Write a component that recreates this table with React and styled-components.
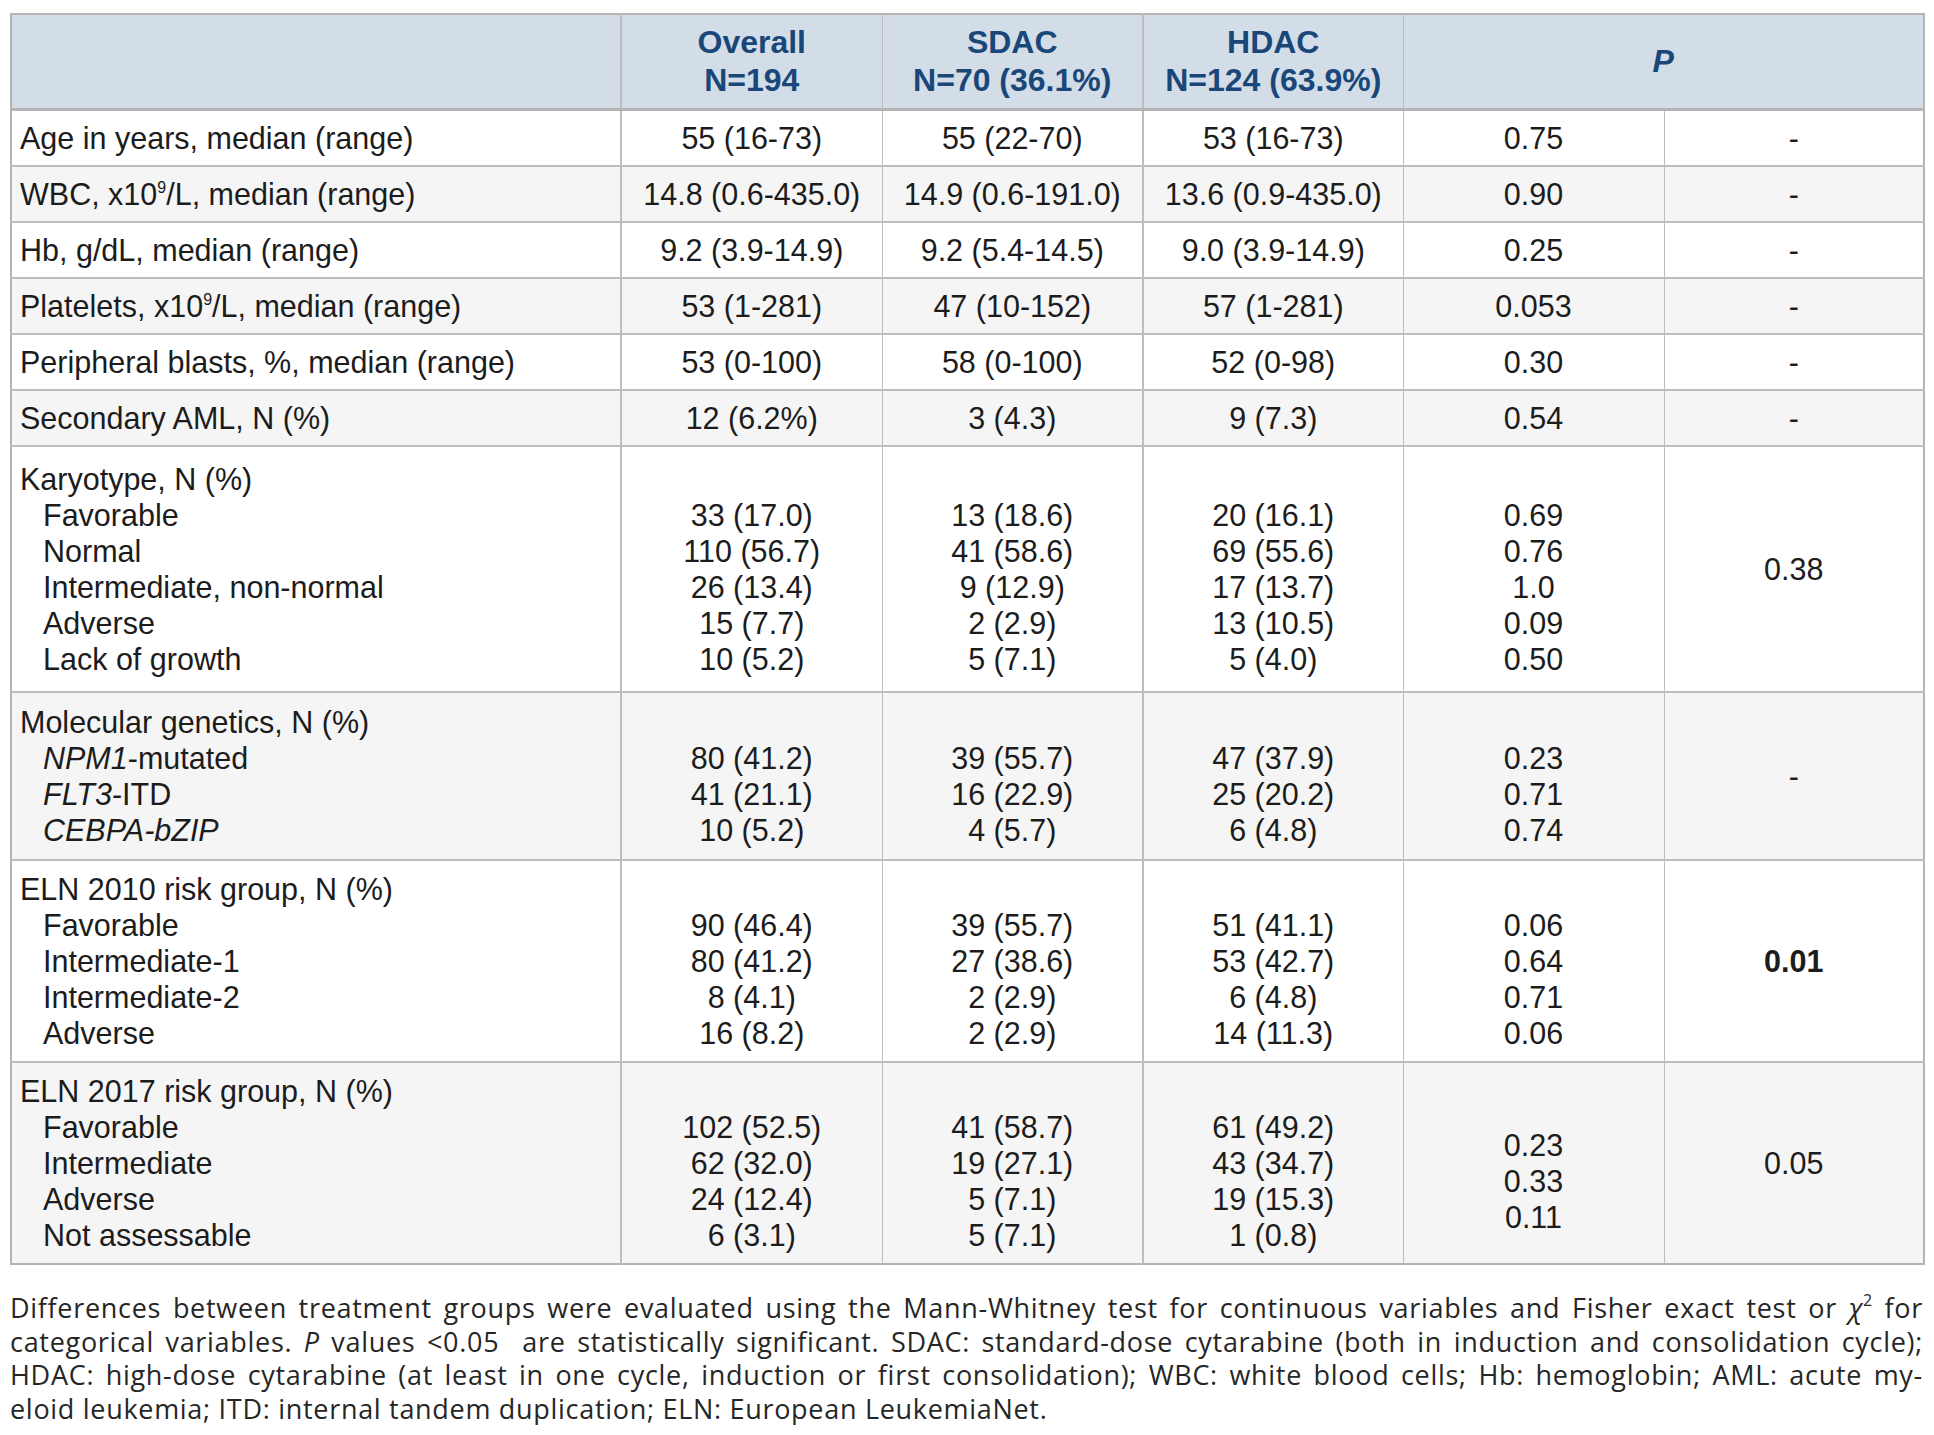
import React from "react";
import styled, { createGlobalStyle } from "styled-components";

const Global = createGlobalStyle`
  html, body { margin: 0; padding: 0; background: #ffffff; }
  body { font-family: "Liberation Sans", Arial, sans-serif; color: #1c1c1c; }
`;

const Page = styled.div`
  padding: 13px 11px 0 10px;
  width: 1913px;
`;

const Table = styled.table`
  width: 1913px;
  border-collapse: collapse;
  table-layout: fixed;
  border: 2px solid #b4b4b4;
  font-size: 30.5px;
  line-height: 36px;
`;

const HeadRow = styled.tr`
  background: #d3dde7;
  border-bottom: 3px solid #b4b4b4;
`;

const HeadCell = styled.th`
  padding: 8px 4px 9px;
  font-size: 32px;
  font-weight: 700;
  color: #1a4779;
  text-align: center;
  vertical-align: middle;
  line-height: 38px;
  white-space: nowrap;
  border-left: ${(p) => (p.$thick ? "2px" : "1px")} solid #bdbdbd;
  font-style: ${(p) => (p.$italic ? "italic" : "normal")};
  &:first-child { border-left: none; }
`;

const Row = styled.tr`
  background: ${(p) => (p.$alt ? "#f5f5f5" : "#ffffff")};
  border-top: 2px solid #bdbdbd;
`;

const Cell = styled.td`
  padding: ${(p) => p.$pad || 9}px 4px;
  text-align: center;
  vertical-align: middle;
  white-space: nowrap;
  border-left: ${(p) => (p.$thick ? "2px" : "1px")} solid #bdbdbd;
  font-weight: ${(p) => (p.$bold ? 700 : 400)};
`;

const LabelCell = styled(Cell)`
  text-align: left;
  padding-left: 8px;
  border-left: none;
`;

const Line = styled.div`
  height: 36px;
  padding-left: ${(p) => (p.$indent ? "23px" : "0")};
`;

const Sup = styled.sup`
  font-size: 16px;
  line-height: 0;
  vertical-align: 12px;
`;

const Note = styled.div`
  margin-top: 26px;
  font-family: "Open Sans", "Noto Sans", sans-serif;
  font-size: 27px;
  letter-spacing: 0.7px;
  line-height: 33.5px;
  color: #262626;
`;

const NoteLine = styled.div`
  white-space: nowrap;
  text-align: justify;
  text-align-last: ${(p) => (p.$last ? "left" : "justify")};
`;

const x109 = (
  <>
    x10<Sup>9</Sup>/L
  </>
);

const single = [
  { label: <>Age in years, median (range)</>, v: ["55 (16-73)", "55 (22-70)", "53 (16-73)"], p: "0.75" },
  { label: <>WBC, {x109}, median (range)</>, v: ["14.8 (0.6-435.0)", "14.9 (0.6-191.0)", "13.6 (0.9-435.0)"], p: "0.90" },
  { label: <>Hb, g/dL, median (range)</>, v: ["9.2 (3.9-14.9)", "9.2 (5.4-14.5)", "9.0 (3.9-14.9)"], p: "0.25" },
  { label: <>Platelets, {x109}, median (range)</>, v: ["53 (1-281)", "47 (10-152)", "57 (1-281)"], p: "0.053" },
  { label: <>Peripheral blasts, %, median (range)</>, v: ["53 (0-100)", "58 (0-100)", "52 (0-98)"], p: "0.30" },
  { label: <>Secondary AML, N (%)</>, v: ["12 (6.2%)", "3 (4.3)", "9 (7.3)"], p: "0.54" },
];

const multi = [
  {
    label: "Karyotype, N (%)",
    pad: 14,
    items: ["Favorable", "Normal", "Intermediate, non-normal", "Adverse", "Lack of growth"],
    v: [
      ["33 (17.0)", "110 (56.7)", "26 (13.4)", "15 (7.7)", "10 (5.2)"],
      ["13 (18.6)", "41 (58.6)", "9 (12.9)", "2 (2.9)", "5 (7.1)"],
      ["20 (16.1)", "69 (55.6)", "17 (13.7)", "13 (10.5)", "5 (4.0)"],
    ],
    p: ["0.69", "0.76", "1.0", "0.09", "0.50"],
    p2: "0.38",
  },
  {
    label: "Molecular genetics, N (%)",
    pad: 11,
    items: [
      <><i>NPM1</i>-mutated</>,
      <><i>FLT3</i>-ITD</>,
      <i>CEBPA-bZIP</i>,
    ],
    v: [
      ["80 (41.2)", "41 (21.1)", "10 (5.2)"],
      ["39 (55.7)", "16 (22.9)", "4 (5.7)"],
      ["47 (37.9)", "25 (20.2)", "6 (4.8)"],
    ],
    p: ["0.23", "0.71", "0.74"],
    p2: "-",
  },
  {
    label: "ELN 2010 risk group, N (%)",
    pad: 10,
    items: ["Favorable", "Intermediate-1", "Intermediate-2", "Adverse"],
    v: [
      ["90 (46.4)", "80 (41.2)", "8 (4.1)", "16 (8.2)"],
      ["39 (55.7)", "27 (38.6)", "2 (2.9)", "2 (2.9)"],
      ["51 (41.1)", "53 (42.7)", "6 (4.8)", "14 (11.3)"],
    ],
    p: ["0.06", "0.64", "0.71", "0.06"],
    p2: "0.01",
    bold: true,
  },
  {
    label: "ELN 2017 risk group, N (%)",
    pad: 10,
    items: ["Favorable", "Intermediate", "Adverse", "Not assessable"],
    v: [
      ["102 (52.5)", "62 (32.0)", "24 (12.4)", "6 (3.1)"],
      ["41 (58.7)", "19 (27.1)", "5 (7.1)", "5 (7.1)"],
      ["61 (49.2)", "43 (34.7)", "19 (15.3)", "1 (0.8)"],
    ],
    p: ["0.23", "0.33", "0.11"],
    p2: "0.05",
  },
];

const Lines = ({ list }) => (
  <>
    <Line />
    {list.map((t, i) => (
      <Line key={i}>{t}</Line>
    ))}
  </>
);

export default function App() {
  let idx = 0;
  return (
    <Page>
      <Global />
      <Table>
        <colgroup>
          <col style={{ width: 610 }} />
          <col style={{ width: 261 }} />
          <col style={{ width: 261 }} />
          <col style={{ width: 260 }} />
          <col style={{ width: 261 }} />
          <col style={{ width: 260 }} />
        </colgroup>
        <thead>
          <HeadRow>
            <HeadCell />
            <HeadCell $thick>
              Overall
              <br />
              N=194
            </HeadCell>
            <HeadCell>
              SDAC
              <br />
              N=70 (36.1%)
            </HeadCell>
            <HeadCell $thick>
              HDAC
              <br />
              N=124 (63.9%)
            </HeadCell>
            <HeadCell colSpan={2} $italic>
              P
            </HeadCell>
          </HeadRow>
        </thead>
        <tbody>
          {single.map((r) => {
            const alt = idx++ % 2 === 1;
            return (
              <Row key={idx} $alt={alt}>
                <LabelCell>{r.label}</LabelCell>
                <Cell $thick>{r.v[0]}</Cell>
                <Cell>{r.v[1]}</Cell>
                <Cell $thick>{r.v[2]}</Cell>
                <Cell>{r.p}</Cell>
                <Cell>-</Cell>
              </Row>
            );
          })}
          {multi.map((r) => {
            const alt = idx++ % 2 === 1;
            return (
              <Row key={idx} $alt={alt}>
                <LabelCell $pad={r.pad}>
                  <Line>{r.label}</Line>
                  {r.items.map((t, i) => (
                    <Line key={i} $indent>
                      {t}
                    </Line>
                  ))}
                </LabelCell>
                <Cell $thick $pad={r.pad}>
                  <Lines list={r.v[0]} />
                </Cell>
                <Cell $pad={r.pad}>
                  <Lines list={r.v[1]} />
                </Cell>
                <Cell $thick $pad={r.pad}>
                  <Lines list={r.v[2]} />
                </Cell>
                <Cell $pad={r.pad}>
                  <Lines list={r.p} />
                </Cell>
                <Cell $pad={r.pad} $bold={r.bold}>
                  {r.p2}
                </Cell>
              </Row>
            );
          })}
        </tbody>
      </Table>
      <Note>
        <NoteLine>
          Differences between treatment groups were evaluated using the Mann-Whitney test for continuous variables and Fisher exact test or <i>χ</i>
          <Sup>2</Sup> for
        </NoteLine>
        <NoteLine>
          categorical variables. <i>P</i> values &lt;0.05&nbsp; are statistically significant. SDAC: standard-dose cytarabine (both in induction and consolidation cycle);
        </NoteLine>
        <NoteLine>
          HDAC: high-dose cytarabine (at least in one cycle, induction or first consolidation); WBC: white blood cells; Hb: hemoglobin; AML: acute my-
        </NoteLine>
        <NoteLine $last>eloid leukemia; ITD: internal tandem duplication; ELN: European LeukemiaNet.</NoteLine>
      </Note>
    </Page>
  );
}
